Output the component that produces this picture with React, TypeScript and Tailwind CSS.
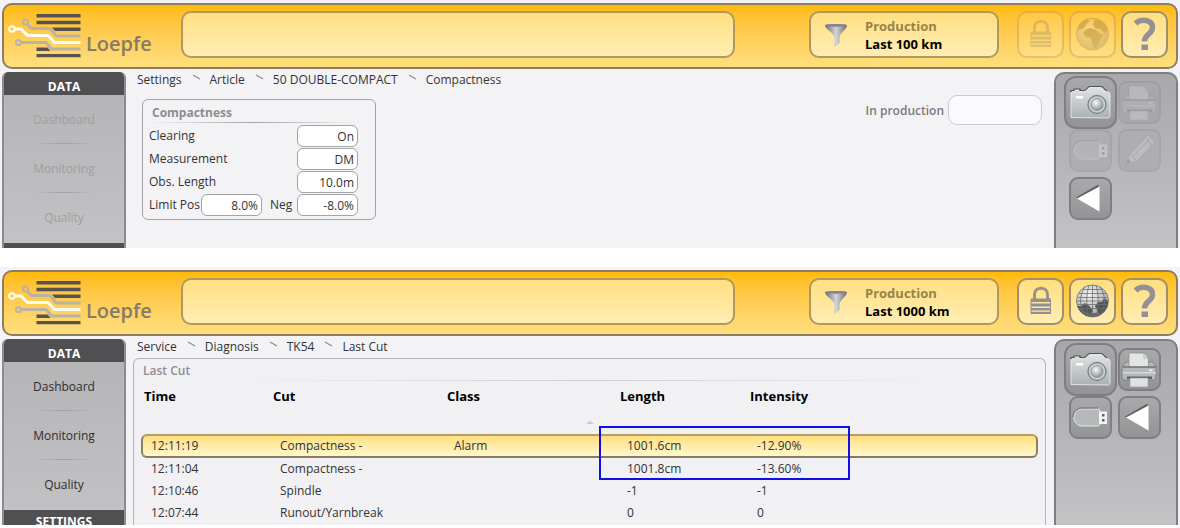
import type { FC, ReactNode } from 'react';
import { Fragment, useId } from 'react';
import clsx from 'clsx';

const NAV_ITEMS = ['Dashboard', 'Monitoring', 'Quality'];

const CUTS = [
  { time: '12:11:19', cut: 'Compactness -', cls: 'Alarm', length: '1001.6cm', intensity: '-12.90%' },
  { time: '12:11:04', cut: 'Compactness -', cls: '', length: '1001.8cm', intensity: '-13.60%' },
  { time: '12:10:46', cut: 'Spindle', cls: '', length: '-1', intensity: '-1' },
  { time: '12:07:44', cut: 'Runout/Yarnbreak', cls: '', length: '0', intensity: '0' },
];

const Logo: FC = () => (
  <svg className="shrink-0" width="76" height="47" viewBox="6 11 76 47" fill="none" aria-hidden="true">
    <g fill="#55524f">
      <path d="M36.500 14h44v3.500h-44zM36.500 20.700h44v3.500h-44zM52 27.500h28.500V31H55zM36.500 47.500h11l3 3.500h-14zM36.500 54h44v3.300h-44z" />
    </g>
    <g stroke="#b9b3a4" strokeWidth="3">
      <path d="M27 24l4.500 4.500H50l6.500 7.500h24" />
      <path d="M20 42.500h26l5.500 6.500h29" />
      <circle cx="25.500" cy="22" r="2.500" strokeWidth="2" />
      <circle cx="18.500" cy="42.500" r="2.500" strokeWidth="2" />
    </g>
    <g stroke="#fffdf0" strokeWidth="3">
      <path d="M14 29h7l6.500 6.500H48l6.500 7h26" />
      <circle cx="12" cy="29" r="2.800" strokeWidth="2" />
    </g>
  </svg>
);

const FunnelIcon: FC = () => {
  const id = useId();
  return (
    <svg width="24" height="26" viewBox="0 0 24 26" aria-hidden="true">
      <defs>
        <linearGradient id={id}>
          <stop offset="0" stopColor="#6b696f" />
          <stop offset=".5" stopColor="#d6d5da" />
          <stop offset="1" stopColor="#6b696f" />
        </linearGradient>
      </defs>
      <path d="M1 3.500C1 1.500 23 1.500 23 3.500c0 3.500-7.500 8-7.500 12v5.500l-5 4V15.500C10.500 11.500 1 7 1 3.500z" fill={`url(#${id})`} />
      <ellipse cx="12" cy="3.300" rx="10.500" ry="1.400" fill="#858389" />
    </svg>
  );
};

const LockIcon: FC = () => (
  <svg width="47" height="47" viewBox="0 0 47 47" aria-hidden="true">
    <path d="M17.500 22v-5.500c0-8.500 13-8.500 13 0V22" fill="none" stroke="#9b9484" strokeWidth="3" />
    <path d="M14 20.500h20v3.500H14zM14 25.500h20v3H14zM14 30h20v2.500H14zM14 33.700h20V36H14z" fill="#949092" />
    <path d="M14 21.500h19.500v14H14z" fill="none" stroke="#949092" strokeWidth="1" />
  </svg>
);

const GlobeIcon: FC<{ africa?: boolean }> = ({ africa }) => {
  const id = useId();
  return (
    <svg width="47" height="47" viewBox="0 0 47 47" aria-hidden="true">
      <defs>
        <radialGradient id={id} cx=".4" cy=".3" r=".75">
          <stop offset="0" stopColor="#f4f4f4" />
          <stop offset="1" stopColor={africa ? '#8c887e' : '#a2a2a4'} />
        </radialGradient>
      </defs>
      <circle cx="23.500" cy="23" r="16" fill={`url(#${id})`} stroke="#707073" strokeWidth=".8" />
      {africa ? (
        <>
          <path d="M9 16c2-4 5-6.500 9-8l3 2-4 3-2 4-5 2zM26 8l7 2 4 5 2 6-4 1-3-4-6-1-2-4z" fill="#77736b" />
          <path d="M16 19l5-2 6 2 4 4 3 1-3 5-2 5-3 4-3-6-1-5-5-1-3-4z" fill="#77736b" />
        </>
      ) : (
        <>
          <path d="M8.500 28l4 0 3-3 5 3 3 4-2 6.500C15 38 10 34 8.500 28zM26 28l3-4 4 0 2-4 4 3c0 7-4 12-9 14l-2-5z" fill="#55565a" />
          <path d="M8.500 28c3 9 14 13.500 22 9.500l-2-3-8 1-6-3z" fill="#66676b" />
          <path d="M23.500 7v32M8 23h31M10 15.500h27M10 30.500h27M16 8.500c-6 9-6 20 0 29M31 8.500c6 9 6 20 0 29M20 7.500c-3 9-3 22 0 31M27 7.500c3 9 3 22 0 31M9 19.500h29M8.500 26.500h30M14 11.500h19" fill="none" stroke="#6d6e72" strokeWidth=".8" />
        </>
      )}
    </svg>
  );
};

const HelpIcon: FC = () => (
  <svg width="47" height="47" viewBox="0 0 47 47" aria-hidden="true">
    <path d="M14.500 12.500c5-5 17-4.500 17 4 0 7-8 6.500-8 14" fill="none" stroke="#949196" strokeWidth="5.500" />
    <path d="M20.500 33.500h6.500V39h-6.500z" fill="#949196" />
  </svg>
);

const CameraIcon: FC = () => {
  const id = useId();
  return (
    <svg width="53" height="53" viewBox="0 0 53 53" aria-hidden="true">
      <defs>
        <linearGradient id={`${id}b`} x1="0" y1="0" x2="0" y2="1">
          <stop offset="0" stopColor="#dfe3e3" />
          <stop offset="1" stopColor="#abb1b1" />
        </linearGradient>
        <radialGradient id={`${id}l`} cx=".4" cy=".35" r=".7">
          <stop offset="0" stopColor="#f7f9f9" />
          <stop offset="1" stopColor="#858c8e" />
        </radialGradient>
      </defs>
      <path d="M7 41.500V17c0-1 1-2 2-2h1v-1.500h5V15h5c3 0 3-3.500 6-3.500h11c3 0 3 4.500 6 4.500h1c1 0 2 1 2 2v22c0 1-1 2-2 2z" fill={`url(#${id}b)`} stroke="#f0f2f2" strokeWidth=".8" />
      <path d="M7 16v-1.500h3V13h6v1.500h4c3 0 3-4 6-4h11c3 0 3 4 6 4" fill="none" stroke="#4e5152" strokeWidth="1.200" />
      <path d="M12 20h7v2.500h-7z" fill="#fff" />
      <circle cx="33" cy="28.500" r="9" fill="#c9cfcf" stroke="#7d8384" strokeWidth="1.300" />
      <circle cx="33" cy="28.500" r="6" fill={`url(#${id}l)`} stroke="#8b9192" strokeWidth=".8" />
    </svg>
  );
};

const PrinterIcon: FC = () => (
  <svg width="43" height="43" viewBox="0 0 43 43" aria-hidden="true">
    <path d="M4 19l4-5h27l3 5v10c0 1.500-1 3-2.500 3h-29C5 32 4 30.500 4 29z" fill="#b4b8b9" stroke="#777a7b" strokeWidth=".8" />
    <path d="M11 19V5h15l4.500 5v9z" fill="#e3e5e5" stroke="#85898a" strokeWidth=".7" />
    <path d="M26 5v5h4.500" fill="none" stroke="#a3a6a7" strokeWidth=".7" />
    <path d="M5 19h33" stroke="#737677" strokeWidth="1.300" />
    <path d="M5 24h33v1.500H5z" fill="#d7dada" />
    <path d="M9 28.500h25v2.500H9z" fill="#606364" />
    <path d="M12 30h18v9H12z" fill="#dfe2e2" stroke="#909495" strokeWidth=".6" />
    <path d="M31 21.500h3.500v1.500H31z" fill="#f6f8f8" />
  </svg>
);

const UsbIcon: FC = () => (
  <svg width="43" height="43" viewBox="0 0 43 43" aria-hidden="true">
    <path d="M29 13H13c-5 0-8 4-8 8.500S8 30 13 30h16c1 0 2-1 2-2V15c0-1-1-2-2-2z" fill="#b5b9ba" stroke="#e5e7e7" strokeWidth="1" />
    <path d="M29 12H13c-5 0-9 4-9 9" fill="none" stroke="#6b6e6f" strokeWidth="1" />
    <path d="M30 15.500h8v12.500h-8z" fill="#f2f2f2" />
    <path d="M33 18h2.500v2.500H33zM33 23h2.500v2.500H33z" fill="#5f6061" />
  </svg>
);

const PencilIcon: FC = () => (
  <svg width="43" height="43" viewBox="0 0 43 43" aria-hidden="true">
    <path d="M8 35l4-10L30 6l7 7-18 19z" fill="#d8d8da" stroke="#8c8c8f" strokeWidth="1" />
    <path d="M27 9l7 7M12 25l7 7M15 27L32 10" fill="none" stroke="#7b7b7e" strokeWidth="1" />
    <path d="M8 35l2-5 3 3z" fill="#55555a" />
  </svg>
);

const BackIcon: FC = () => (
  <svg width="43" height="43" viewBox="0 0 43 43" aria-hidden="true">
    <path d="M7 20.500L29.500 7.500V11L10 22z" fill="#5d5d60" />
    <path d="M8 21.500L30.500 9.500V34.500z" fill="#fff" />
  </svg>
);

const HeaderButton: FC<{ label: string; disabled?: boolean; children: ReactNode }> = ({ label, disabled, children }) => (
  <button
    type="button"
    aria-label={label}
    disabled={disabled}
    className={clsx(
      'flex h-[47px] w-[47px] items-center justify-center rounded-[10px] border-2 border-[#a08f68] bg-linear-to-b from-[#ffdf80] to-[#ffedb3] [&>svg]:shrink-0',
      disabled && 'opacity-30',
    )}
  >
    {children}
  </button>
);

const Header: FC<{ range: string; locked?: boolean }> = ({ range, locked }) => (
  <header className="flex items-start rounded-[10px] border-2 border-[#8f7d62] bg-linear-to-b from-[#ffbb00] to-[#ffdf7e] pt-[6px] pr-2 pb-[9px] pl-[2px]">
    <div className="flex w-[175px] items-start gap-1">
      <Logo />
      <span className="mt-[19px] text-[20px] leading-[28px] font-semibold text-[#857b6b]">Loepfe</span>
    </div>
    <input
      type="text"
      readOnly
      aria-label="Message"
      className="mr-[74px] h-[47px] min-w-0 flex-1 rounded-[10px] border-2 border-[#b0985e] bg-linear-to-b from-[#ffdf80] to-[#ffedb3] px-3 outline-none"
    />
    <button
      type="button"
      className="mr-[18px] flex h-[47px] w-[190px] items-center gap-[17px] rounded-[10px] border-2 border-[#b0985e] bg-linear-to-b from-[#ffdf80] to-[#ffedb3] pl-[13px] text-left text-[13px] leading-[18px] font-bold"
    >
      <FunnelIcon />
      <span className="flex flex-col">
        <span className="text-[#968347]">Production</span>
        <span className="text-black">{range}</span>
      </span>
    </button>
    <div className="flex gap-[5px]">
      <HeaderButton label="Lock" disabled={locked}><LockIcon /></HeaderButton>
      <HeaderButton label="Language" disabled={locked}><GlobeIcon africa={locked} /></HeaderButton>
      <HeaderButton label="Help"><HelpIcon /></HeaderButton>
    </div>
  </header>
);

const Sidebar: FC<{ disabled?: boolean; children: ReactNode }> = ({ disabled, children }) => (
  <nav className="w-[124px] shrink-0 overflow-hidden rounded-t-[6px] border-x-2 border-[#8b8a8d] bg-linear-to-b from-[#b3b2b4] to-[#c3c2c5]">
    <h2 className="h-[23px] bg-[#504f51] pt-[6px] text-center text-[12px] leading-[18px] font-bold text-white">DATA</h2>
    <ul className="h-[148px]">
      {NAV_ITEMS.map((item, i) => (
        <li key={item} className="flex h-[49px] flex-col items-center">
          <button
            type="button"
            disabled={disabled}
            className={clsx('h-12 w-full pt-[2px] text-[12px]', disabled ? 'text-[#a09fa2]' : 'text-[#2f2e30]')}
          >
            {item}
          </button>
          {i < NAV_ITEMS.length - 1 && (
            <span className="h-px w-[60px] bg-linear-to-r from-transparent via-[#a09fa2] to-transparent" />
          )}
        </li>
      ))}
    </ul>
    {children}
  </nav>
);

const Breadcrumb: FC<{ items: string[] }> = ({ items }) => (
  <nav aria-label="Breadcrumb" className="flex h-4 items-center pl-[11px] text-[12px] leading-4 text-[#333235]">
    {items.map((item, i) => (
      <Fragment key={item}>
        {i > 0 && (
          <svg width="28" height="16" viewBox="0 0 28 16" aria-hidden="true">
            <path d="M11 3l7 4" stroke="#8d8c90" strokeWidth="1.200" />
          </svg>
        )}
        <a href="#">{item}</a>
      </Fragment>
    ))}
  </nav>
);

const ToolButton: FC<{ label: string; large?: boolean; disabled?: boolean; children: ReactNode }> = ({ label, large, disabled, children }) => (
  <button
    type="button"
    aria-label={label}
    disabled={disabled}
    className={clsx(
      'flex items-center justify-center border-2 border-[#7f7e82] bg-linear-to-b from-[#a9a8ab] to-[#949396] [&>svg]:shrink-0',
      large ? '-m-[5px] h-[53px] w-[53px] rounded-[12px]' : 'h-[43px] w-[43px] rounded-[9px]',
      disabled && 'opacity-25',
    )}
  >
    {children}
  </button>
);

const Toolbar: FC<{ children: ReactNode }> = ({ children }) => (
  <aside className="w-[124px] shrink-0 rounded-t-[10px] border-2 border-b-0 border-[#7f7e82] bg-linear-to-b from-[#a8a7aa] to-[#c3c2c5]">
    <div className="grid grid-cols-[43px_43px] gap-x-[6px] gap-y-[5px] pt-[7px] pl-[13px]">{children}</div>
  </aside>
);

const Field: FC<{ label: string; value: string; compact?: boolean }> = ({ label, value, compact }) => {
  const id = useId();
  return (
    <>
      <label htmlFor={id} className={clsx(compact && 'w-[52px]')}>{label}</label>
      <input
        id={id}
        type="text"
        defaultValue={value}
        className={clsx(
          'h-[22px] w-[61px] rounded-[6px] border border-[#a3a2a6] bg-white pr-[3px] text-right outline-none',
          !compact && 'ml-auto',
        )}
      />
    </>
  );
};

const CompactnessScreen: FC = () => (
  <section className="bg-[#f3f2f5] px-[2px] pt-[3px]">
    <Header range="Last 100 km" locked />
    <div className="mt-[3px] flex">
      <Sidebar disabled>
        <div className="h-[5px] bg-[#504f51]" />
      </Sidebar>
      <main className="min-w-0 flex-1">
        <Breadcrumb items={['Settings', 'Article', '50 DOUBLE-COMPACT', 'Compactness']} />
        <div className="flex items-start justify-between pr-3 pl-4">
          <fieldset className="mt-[11px] w-[234px] rounded-[6px] border border-[#a3a2a6] pr-[17px] pb-[3px] pl-[6px] text-[12px] leading-4 text-[#333235]">
            <h3 className="mt-1 pl-[3px] text-[12px] leading-[18px] font-bold text-[#8e8d91]">Compactness</h3>
            <div className="mb-[2px] h-px bg-linear-to-r from-transparent via-[#a3a2a6] to-transparent" />
            <div className="flex flex-col gap-px">
              <div className="flex items-center"><Field label="Clearing" value="On" /></div>
              <div className="flex items-center"><Field label="Measurement" value="DM" /></div>
              <div className="flex items-center"><Field label="Obs. Length" value="10.0m" /></div>
              <div className="flex items-center">
                <Field label="Limit Pos" value="8.0%" compact />
                <span className="w-2" />
                <Field label="Neg" value="-8.0%" />
              </div>
            </div>
          </fieldset>
          <div className="mt-[7px] flex items-center gap-1">
            <label htmlFor="in-production" className="pt-[2px] text-[12px] font-semibold text-[#7b7a7e]">In production</label>
            <input
              id="in-production"
              type="text"
              readOnly
              className="h-[30px] w-[94px] rounded-[9px] border border-[#cbcacf] bg-[#faf9fc] px-2 outline-none"
            />
          </div>
        </div>
      </main>
      <Toolbar>
        <ToolButton label="Screenshot" large><CameraIcon /></ToolButton>
        <ToolButton label="Print" disabled><PrinterIcon /></ToolButton>
        <ToolButton label="Save to USB" disabled><UsbIcon /></ToolButton>
        <ToolButton label="Edit" disabled><PencilIcon /></ToolButton>
        <ToolButton label="Back"><BackIcon /></ToolButton>
      </Toolbar>
    </div>
  </section>
);

const selectedCell =
  'border-y-2 border-t-[#b59d66] border-b-[#857a62] bg-linear-to-b from-[#ffdf7e] to-[#fff7cc] first:rounded-l-[6px] first:border-l-2 first:border-l-[#8f7f5c] first:pl-2 last:rounded-r-[6px] last:border-r-2 last:border-r-[#8f7f5c]';

const LastCutTable: FC = () => (
  <div className="relative mx-[7px]">
    <table className="w-full table-fixed border-separate border-spacing-0 text-left text-[12px] leading-4 text-[#333235]">
      <thead>
        <tr className="h-[53px] align-top text-[13px] leading-[18px] text-black">
          <th className="w-[129px] pt-[6px] pl-[3px]">Time</th>
          <th className="w-[174px] pt-[6px] pl-[3px]">Cut</th>
          <th className="w-[173px] pt-[6px] pl-[3px]">Class</th>
          <th className="w-[130px] pt-[6px] pl-[3px]">Length</th>
          <th className="pt-[6px] pl-[3px]">Intensity</th>
        </tr>
      </thead>
      <tbody>
        {CUTS.map((row, i) => (
          <tr key={row.time} className={i === 0 ? 'h-6' : 'h-[22px]'}>
            {[row.time, row.cut, row.cls, row.length, row.intensity].map((text, col) => (
              <td key={col} className={clsx('py-0 pr-0', i === 0 ? selectedCell : '', 'pl-[10px]')}>{text}</td>
            ))}
          </tr>
        ))}
      </tbody>
    </table>
    <svg className="absolute top-[39px] left-[445px]" width="8" height="5" viewBox="0 0 8 5" aria-hidden="true">
      <path d="M0 4l4-3 4 3z" fill="#c9c8cc" />
    </svg>
    <div className="pointer-events-none absolute top-[45px] left-[458px] h-[54px] w-[251px] border-2 border-[#0f0fe6]" />
  </div>
);

const LastCutScreen: FC = () => (
  <section className="mt-[19px] bg-[#f3f2f5] px-[2px] pt-[3px]">
    <Header range="Last 1000 km" />
    <div className="mt-[3px] flex">
      <Sidebar>
        <h2 className="h-[15px] overflow-hidden bg-[#504f51] pt-[3px] text-center text-[12px] leading-[18px] font-bold text-white">SETTINGS</h2>
      </Sidebar>
      <main className="flex min-w-0 flex-1 flex-col">
        <Breadcrumb items={['Service', 'Diagnosis', 'TK54', 'Last Cut']} />
        <div className="mt-[3px] mr-2 ml-[7px] flex-1 rounded-t-[6px] border border-b-0 border-[#b3b2b6] bg-[#f1f0f3]">
          <h3 className="mt-[3px] pl-[9px] text-[12px] leading-[18px] font-semibold text-[#8e8d91]">Last Cut</h3>
          <div className="mx-[100px] h-px bg-linear-to-r from-transparent via-[#cfced2] to-transparent" />
          <LastCutTable />
        </div>
      </main>
      <Toolbar>
        <ToolButton label="Screenshot" large><CameraIcon /></ToolButton>
        <ToolButton label="Print"><PrinterIcon /></ToolButton>
        <ToolButton label="Save to USB"><UsbIcon /></ToolButton>
        <ToolButton label="Back"><BackIcon /></ToolButton>
      </Toolbar>
    </div>
  </section>
);

const App: FC = () => (
  <div className="bg-white font-['Open_Sans','Noto_Sans',sans-serif]">
    <CompactnessScreen />
    <LastCutScreen />
  </div>
);

export default App;
